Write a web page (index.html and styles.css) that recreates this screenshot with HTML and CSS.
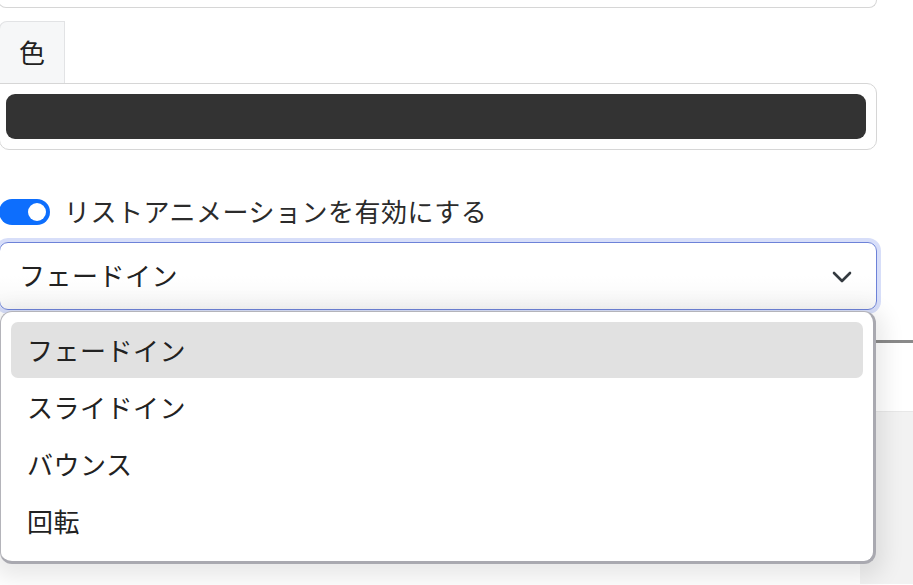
FILE: index.html
```html
<!DOCTYPE html>
<html lang="ja">
<head>
<meta charset="utf-8">
<link rel="stylesheet" href="styles.css">
</head>
<body>
<div class="page">
  <div class="top-card"></div>

  <div class="color-group">
    <div class="color-label">色</div>
    <div class="color-field"><div class="swatch"></div></div>
  </div>

  <label class="switch-row">
    <span class="switch"><span class="knob"></span></span>
    <span class="switch-text">リストアニメーションを有効にする</span>
  </label>

  <div class="select-wrap">
    <div class="select">
      <span class="select-value">フェードイン</span>
      <svg class="chevron" width="20" height="12" viewBox="0 0 20 12"><path d="M2 2 L10 10 L18 2" fill="none" stroke="#343a40" stroke-width="2.6" stroke-linecap="round" stroke-linejoin="round"/></svg>
    </div>

    <div class="backdrop">
      <div class="back-rule"></div>
      <div class="back-panel"></div>
    </div>

    <ul class="popup">
      <li class="option active">フェードイン</li>
      <li class="option">スライドイン</li>
      <li class="option">バウンス</li>
      <li class="option">回転</li>
    </ul>
  </div>
</div>
</body>
</html>
```

FILE: styles.css
```css
* { box-sizing: border-box; }
html, body {
  margin: 0;
  padding: 0;
  background: #ffffff;
  overflow: hidden;
}
body {
  width: 913px;
  height: 585px;
  font-family: "Noto Sans CJK JP", "Noto Sans", sans-serif;
  color: #212529;
}
.page {
  width: 877px;
}
.top-card {
  height: 8px;
  border: 1px solid #d6d6d6;
  border-top: none;
  border-radius: 0 0 12px 12px;
  margin-left: -2px;
}
.color-group {
  margin-top: 13px;
}
.color-label {
  width: 66px;
  height: 62px;
  background: #f6f7f8;
  border: 1px solid #e2e3e5;
  border-bottom: none;
  border-radius: 8px 0 0 0;
  display: flex;
  align-items: center;
  justify-content: center;
  font-size: 26px;
  line-height: 1;
  color: #222;
  padding-bottom: 2px;
  margin-left: -1px;
}
.color-field {
  height: 67px;
  border: 1px solid #d6d6d6;
  border-radius: 0 10px 10px 10px;
  padding: 10px 10px 10px 6px;
  margin-left: -1px;
}
.swatch {
  height: 100%;
  background: #333333;
  border-radius: 9px;
}
.switch-row {
  display: flex;
  align-items: center;
  gap: 14px;
  margin-top: 47px;
  height: 30px;
}
.switch {
  position: relative;
  width: 51px;
  height: 26px;
  border-radius: 13px;
  background: #0d6efd;
  margin-left: -1px;
  flex: none;
}
.knob {
  position: absolute;
  top: 4px;
  right: 4px;
  width: 18px;
  height: 18px;
  border-radius: 50%;
  background: #fff;
}
.switch-text {
  font-size: 26px;
  letter-spacing: 0.5px;
  line-height: 30px;
  color: #2b2b2b;
  margin-top: -2px;
}
.select-wrap {
  position: relative;
  margin-top: 15px;
}
.select {
  position: relative;
  z-index: 2;
  height: 68px;
  border: 1px solid #6d82d8;
  border-radius: 9px;
  box-shadow: 0 0 0 4px #d7def9;
  background: linear-gradient(#ffffff 0%, #ffffff 50%, #f7f7f7 100%);
  display: flex;
  align-items: center;
  justify-content: space-between;
  padding: 0 24px 0 19px;
  margin-left: -1px;
}
.select-value {
  font-size: 26px;
  letter-spacing: 0.5px;
  line-height: 1;
  color: #222;
  padding-bottom: 2px;
}
.chevron {
  margin-top: 2px;
}
.backdrop {
  position: absolute;
  left: 860px;
  top: 98px;
  width: 60px;
  height: 244px;
}
.back-rule {
  height: 3px;
  background: #8a8a8a;
}
.back-panel {
  margin-top: 68px;
  height: 173px;
  border-top: 1px solid #e8e8e8;
  background: #f2f2f2;
}
.popup {
  position: absolute;
  z-index: 3;
  left: 0;
  top: 69px;
  width: 876px;
  height: 253px;
  margin: 0;
  list-style: none;
  background: #fff;
  border: 1px solid #b4b4ba;
  border-right-width: 3px;
  border-bottom-width: 3px;
  border-right-color: #a9a9b0;
  border-bottom-color: #a9a9b0;
  border-radius: 12px;
  padding: 10px 10px 10px 10px;
  box-shadow: 0 6px 22px 8px rgba(0, 0, 0, 0.09);
}
.option {
  height: 57px;
  display: flex;
  align-items: center;
  padding: 0 0 2px 16px;
  font-size: 26px;
  letter-spacing: 0.5px;
  color: #222;
  border-radius: 7px;
}
.option.active {
  background: #e1e1e1;
  height: 56px;
  margin-bottom: 1px;
}
```
